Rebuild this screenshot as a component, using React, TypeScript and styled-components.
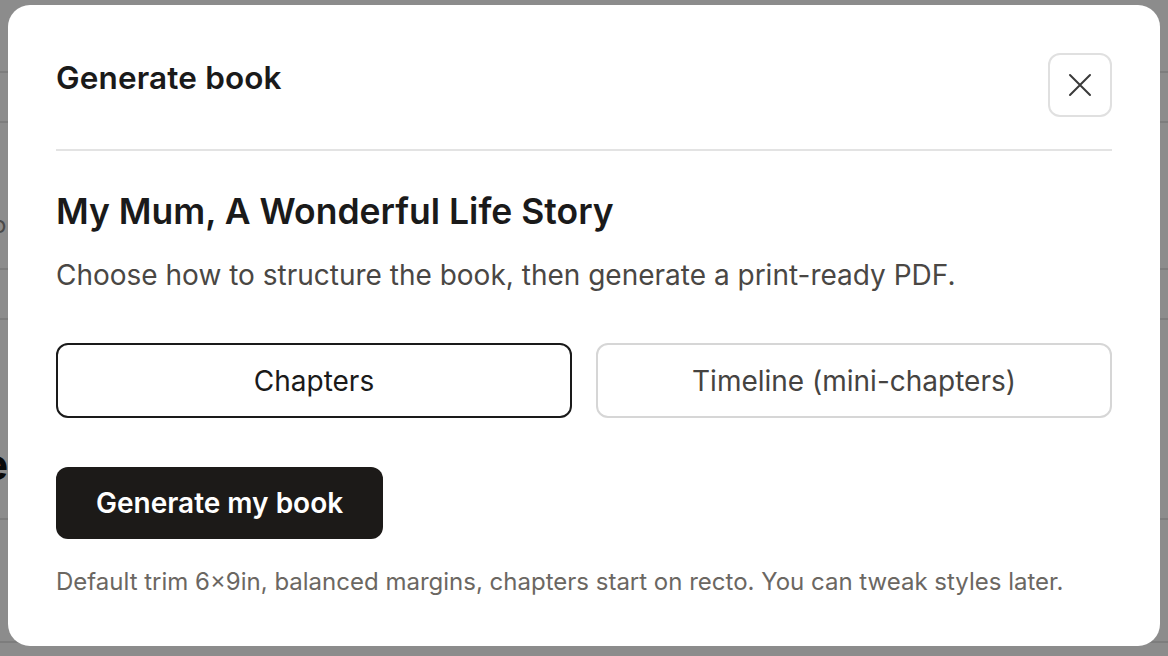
import styled, { createGlobalStyle } from 'styled-components'

const GlobalStyle = createGlobalStyle`
  * { box-sizing: border-box; }
  html, body { margin: 0; padding: 0; }
  body {
    font-family: Inter, "Liberation Sans", sans-serif;
    color: #1a1a1a;
    background: #fff;
  }
`

/** page behind the dialog */
const Page = styled.div`
  height: 656px;
  overflow: hidden;
  background: #fff;
`

const PageRow = styled.div<{ $h: number; $pad?: number }>`
  height: ${(p) => p.$h}px;
  padding-top: ${(p) => p.$pad ?? 0}px;
  border-bottom: 2px solid #e4e4e4;
  overflow: hidden;
  line-height: 1;
`

const PeekText = styled.span<{ $bold?: boolean }>`
  display: inline-block;
  margin-left: ${(p) => (p.$bold ? -18 : -8)}px;
  font-size: ${(p) => (p.$bold ? 44 : 24)}px;
  font-weight: ${(p) => (p.$bold ? 700 : 400)};
  color: ${(p) => (p.$bold ? '#111' : '#888')};
`

const Overlay = styled.div`
  position: fixed;
  inset: 0;
  background: rgba(0, 0, 0, 0.45);
  display: flex;
  justify-content: center;
  align-items: flex-start;
  padding-top: 5px;
`

const Dialog = styled.div`
  width: 1152px;
  background: #fff;
  border-radius: 22px;
  padding: 48px 48px 48px;
`

const Header = styled.div`
  display: flex;
  justify-content: space-between;
  align-items: flex-start;
  padding-bottom: 32px;
  border-bottom: 2px solid #e3e3e3;
`

const Title = styled.h2`
  margin: 6px 0 0;
  font-size: 31.5px;
  line-height: 38px;
  font-weight: 600;
  letter-spacing: 0.15px;
  color: #1a1a1a;
`

const CloseButton = styled.button`
  width: 64px;
  height: 64px;
  border: 2px solid #e0e0e0;
  border-radius: 12px;
  background: #fff;
  display: inline-flex;
  align-items: center;
  justify-content: center;
  color: #3a3a3a;
  cursor: pointer;
  padding: 0;
`

const Body = styled.div`
  padding-top: 39px;
`

const BookTitle = styled.h1`
  margin: 0;
  font-size: 35.5px;
  line-height: 44px;
  font-weight: 600;
  color: #1a1a1a;
`

const Lead = styled.p`
  margin: 23px 0 0;
  font-size: 28px;
  line-height: 36px;
  color: #4a4744;
`

const Options = styled.div`
  display: grid;
  grid-template-columns: 1fr 1fr;
  gap: 24px;
  margin-top: 50px;
`

const Option = styled.button<{ $active?: boolean }>`
  height: 75px;
  border-radius: 12px;
  background: #fff;
  border: 2px solid ${(p) => (p.$active ? '#1a1a1a' : '#d6d6d6')};
  color: ${(p) => (p.$active ? '#1a1a1a' : '#454341')};
  font-family: Inter, "Liberation Sans", sans-serif;
  font-size: 28px;
  cursor: pointer;
`

const PrimaryButton = styled.button`
  margin-top: 49px;
  height: 72px;
  padding: 0 40px;
  border: 0;
  border-radius: 12px;
  background: #1c1a18;
  color: #fff;
  font-family: Inter, "Liberation Sans", sans-serif;
  font-size: 28px;
  font-weight: 600;
  cursor: pointer;
`

const Note = styled.p`
  margin: 27px 0 0;
  font-size: 24px;
  line-height: 32px;
  color: #6b6762;
`

const CloseIcon = () => (
  <svg width="24" height="24" viewBox="0 0 24 24" fill="none" stroke="currentColor" strokeWidth="2" strokeLinecap="round">
    <path d="M2 2 L22 22 M22 2 L2 22" />
  </svg>
)

export default function App() {
  return (
    <>
      <GlobalStyle />
      <Page>
        <PageRow $h={73} />
        <PageRow $h={50} />
        <PageRow $h={147} $pad={90}>
          <PeekText>o</PeekText>
        </PageRow>
        <PageRow $h={50} />
        <PageRow $h={200} $pad={122}>
          <PeekText $bold>e</PeekText>
        </PageRow>
        <PageRow $h={123} />
      </Page>
      <Overlay>
        <Dialog role="dialog" aria-label="Generate book">
          <Header>
            <Title>Generate book</Title>
            <CloseButton aria-label="Close">
              <CloseIcon />
            </CloseButton>
          </Header>
          <Body>
            <BookTitle>My Mum, A Wonderful Life Story</BookTitle>
            <Lead>Choose how to structure the book, then generate a print-ready PDF.</Lead>
            <Options>
              <Option $active>Chapters</Option>
              <Option>Timeline (mini-chapters)</Option>
            </Options>
            <PrimaryButton>Generate my book</PrimaryButton>
            <Note>Default trim 6×9in, balanced margins, chapters start on recto. You can tweak styles later.</Note>
          </Body>
        </Dialog>
      </Overlay>
    </>
  )
}
